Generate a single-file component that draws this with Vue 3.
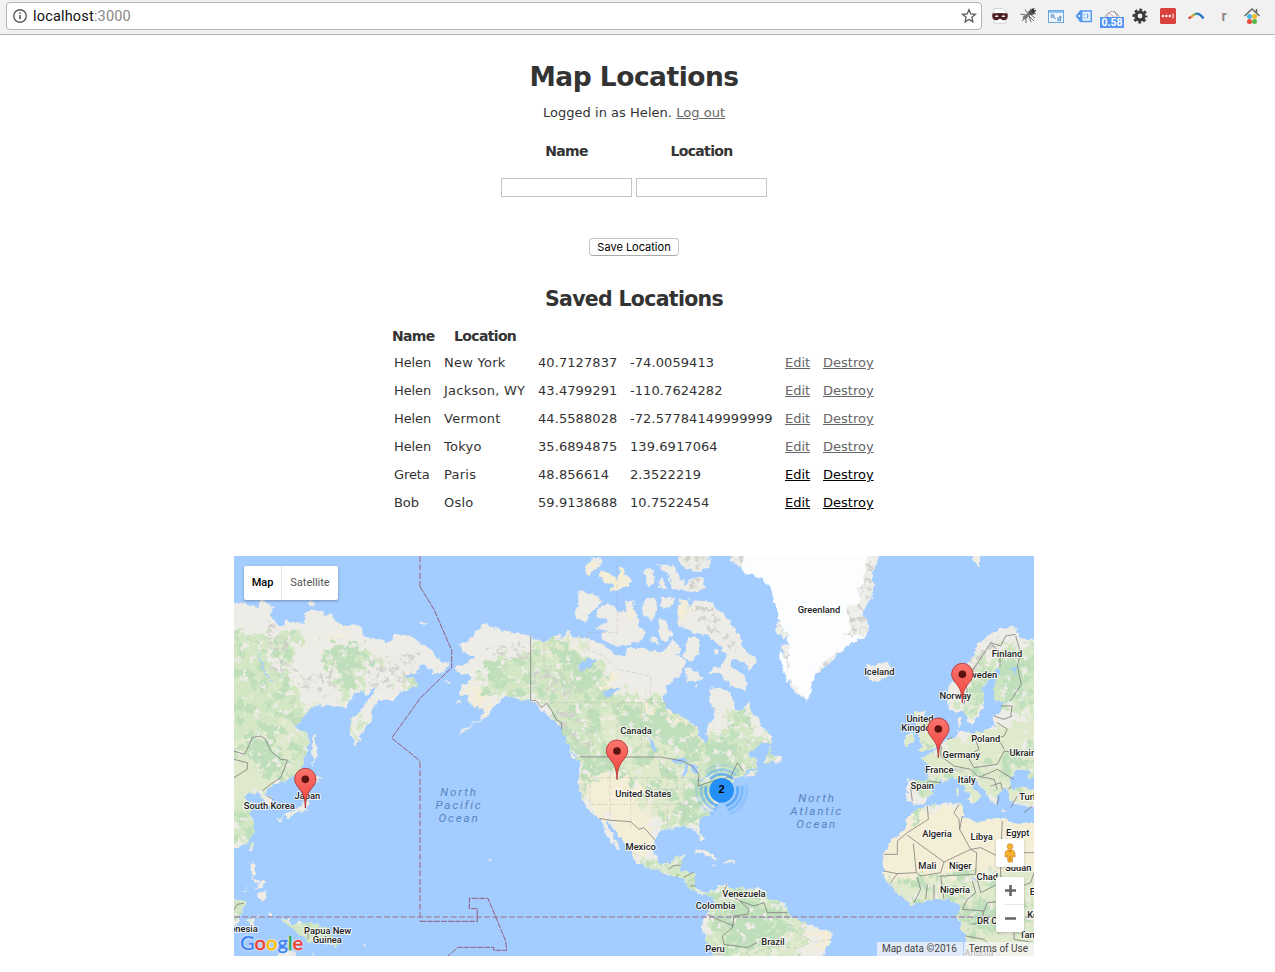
<script setup>
const rows = [
  ['Helen', 'New York', '40.7127837', '-74.0059413'],
  ['Helen', 'Jackson, WY', '43.4799291', '-110.7624282'],
  ['Helen', 'Vermont', '44.5588028', '-72.57784149999999'],
  ['Helen', 'Tokyo', '35.6894875', '139.6917064'],
  ['Greta', 'Paris', '48.856614', '2.3522219'],
  ['Bob', 'Oslo', '59.9138688', '10.7522454'],
]

// Map geometry is kept at three units per CSS pixel.
const land = [
  // Asia
  'M-40 135L30 140 75 155 80 135 100 140 118 155 105 175 135 210 148 213 155 188 165 197 210 200 212 175 232 160 262 168 268 178 298 175 300 190 325 210 375 208 388 222 388 242 415 245 470 262 480 235 520 238 550 252 600 290 605 305 640 318 643 330 620 358 600 350 590 335 560 325 562 340 545 350 510 352 515 362 545 370 551 392 530 395 500 410 480 432 430 432 415 460 412 475 410 495 395 505 390 525 380 540 372 560 360 572 357 550 350 520 352 490 375 470 395 440 410 425 425 397 415 395 400 420 390 415 385 405 360 415 345 435 335 455 300 448 270 450 235 452 215 475 195 500 180 517 215 525 222 540 222 575 215 600 205 632 185 655 150 675 120 685 100 705 95 715 110 725 120 740 118 752 100 755 90 740 85 725 70 705 60 715 40 712 30 725 45 740 62 735 50 755 45 775 60 800 60 825 45 855 25 870 -40 885Z',
  'M220 142L232 134 246 146 226 146ZM550 205L560 196 578 203 572 210ZM627 375L648 378 645 383Z',
  'M235 540L242 536 248 575 252 600 243 602 240 633 234 620Z',
  'M222 668L240 655 262 665 245 678 226 682ZM228 690L220 725 222 750 217 765 190 768 175 777 142 785 155 774 190 760 210 740 215 710ZM132 780L145 785 143 800 135 798ZM155 782L175 775 165 787Z',
  'M50 862L60 865 55 885 48 880ZM50 925L62 922 66 945 58 965 75 980 65 985 50 958ZM76 980L92 976 85 1000 68 995ZM25 1010L45 988 38 1000ZM80 1012L97 1000 100 1028 88 1032 68 1018Z',
  'M-40 1042L20 1028 35 1038 25 1060 15 1085 12 1105 -40 1120ZM40 1090L82 1078 62 1088 55 1100 68 1120 48 1112ZM100 1070L112 1070 112 1085Z',
  'M140 1090L165 1088 175 1105 200 1098 250 1105 280 1120 300 1150 320 1165 300 1170 270 1158 250 1150 225 1160 205 1140 190 1125 160 1110ZM320 1132L355 1122 350 1135ZM385 1155L400 1170 393 1172ZM130 1240L130 1200 142 1186 185 1185 178 1240ZM230 1240L238 1180 246 1240Z',
  // North and Central America
  'M675 265L700 262 710 245 735 215 760 203 775 215 798 222 848 230 888 240 928 262 963 240 983 235 975 252 1003 225 1013 240 1028 250 1035 240 1083 255 1118 270 1133 290 1173 302 1178 280 1198 275 1238 280 1278 290 1298 275 1318 250 1338 280 1328 298 1358 312 1353 330 1333 360 1298 395 1286 430 1298 458 1348 485 1388 512 1393 535 1410 568 1423 545 1418 520 1438 490 1438 460 1426 430 1428 398 1458 395 1493 415 1503 458 1523 468 1541 435 1563 480 1583 512 1615 540 1612 560 1580 562 1555 585 1540 596 1560 606 1573 635 1545 640 1530 664 1510 660 1490 685 1475 715 1460 725 1438 765 1398 790 1393 815 1410 855 1398 855 1383 820 1358 812 1328 812 1298 820 1273 830 1264 855 1260 890 1278 920 1303 925 1318 920 1328 900 1352 895 1343 915 1338 945 1383 950 1383 990 1398 1005 1423 1010 1433 1002 1442 1020 1430 1022 1415 1015 1395 1015 1368 998 1348 968 1313 958 1278 945 1238 932 1198 912 1196 890 1173 860 1148 830 1123 797 1122 812 1160 878 1153 882 1118 838 1098 790 1068 768 1043 730 1033 680 1038 612 1010 585 983 520 948 480 925 465 900 435 858 430 818 420 803 430 780 452 760 482 720 505 690 527 665 540 695 518 740 490 750 470 740 455 715 450 700 420 680 415 685 390 715 370 700 352 670 350 665 332 700 320 720 302 690 290Z',
  'M1592 620L1600 595 1613 568 1608 595 1640 600 1643 620 1618 615 1610 622ZM1532 665L1550 646 1580 638 1565 655ZM660 435L680 432 675 440ZM1000 580L1020 600 1035 612 1015 608Z',
  'M1378 888L1398 880 1430 892 1455 907 1435 908 1410 894ZM1468 922L1480 912 1505 916 1505 924ZM1430 924L1446 925 1440 929ZM1522 923L1532 924ZM763 905L773 912 766 918Z',
  // Arctic islands
  'M1033 108L1068 110 1108 137 1073 165 1053 205 1023 180 1033 150ZM1118 145L1143 150 1148 162 1175 168 1172 140 1198 132 1200 160 1213 200 1233 235 1218 255 1188 265 1148 270 1113 260 1098 235 1125 228 1083 215 1125 195 1083 180 1090 162Z',
  'M1048 45L1078 5 1105 10 1098 30 1063 57ZM1098 40L1128 55 1150 72 1160 30 1170 38 1173 60 1195 65 1188 90 1148 102 1123 108 1138 90 1103 70ZM1223 42L1253 35 1260 80 1243 92 1233 60ZM1278 70L1293 75 1295 100 1273 95ZM1268 25L1318 25 1328 50 1348 75 1360 100 1338 105 1313 100 1305 50ZM1328 15L1358 -30 1423 -30 1428 35 1398 45 1358 40ZM1365 70L1408 65 1416 95 1378 108 1350 105Z',
  'M1238 125L1263 125 1268 165 1253 197 1238 185 1223 160ZM1280 122L1323 125 1313 155 1288 160ZM1278 190L1293 190 1308 220 1318 235 1298 260 1278 250 1273 210ZM1363 240L1398 250 1398 290 1368 320 1348 300 1358 265ZM1358 335L1368 335 1403 365 1393 375 1358 375ZM1250 260L1258 240 1278 265ZM1440 278L1453 280 1450 300 1437 296ZM1378 392L1390 390 1388 400Z',
  'M1338 135L1368 130 1361 165 1373 140 1403 132 1438 140 1458 170 1483 185 1498 215 1518 240 1528 280 1570 310 1548 345 1528 320 1498 310 1488 330 1528 355 1543 380 1533 405 1488 385 1458 355 1428 350 1438 335 1463 335 1478 300 1453 265 1418 235 1378 230 1343 215 1328 195Z',
  // South America
  'M1438 1000L1482 980 1485 995 1590 1000 1600 1025 1650 1040 1665 1080 1740 1110 1795 1130 1797 1150 1775 1175 1755 1240 1440 1240 1435 1180 1410 1140 1403 1110 1420 1070 1442 1045 1432 1010Z',
  // Europe
  'M2440 260L2360 245 2350 220 2330 210 2290 222 2250 245 2220 272 2230 278 2210 310 2180 355 2145 390 2138 415 2145 460 2165 472 2193 455 2200 500 2215 507 2235 475 2250 450 2245 400 2268 370 2290 333 2302 345 2280 380 2280 430 2310 440 2335 434 2300 450 2300 470 2280 480 2280 510 2240 530 2210 532 2178 523 2168 495 2182 485 2177 520 2165 545 2135 550 2120 570 2090 595 2057 608 2085 625 2080 675 2020 670 2017 735 2040 745 2050 748 2070 740 2095 715 2090 700 2120 675 2160 665 2190 690 2215 740 2230 730 2245 720 2215 690 2190 655 2210 665 2250 700 2270 735 2285 747 2290 720 2305 700 2325 700 2325 730 2350 748 2440 752Z',
  'M1890 320L1920 330 1960 318 1980 345 1935 377 1900 365 1915 347ZM2045 465L2070 460 2075 490 2090 520 2112 555 2100 578 2050 588 2065 570 2055 540ZM2015 535L2040 530 2040 560 2010 568ZM2168 695L2175 695 2174 720 2168 718ZM2200 730L2220 728 2217 743ZM2034 402L2037 402 2036 405ZM2214 -30L2240 -30 2238 30 2232 36 2218 15ZM2302 762L2318 763 2305 768Z',
  // Africa
  'M2045 760L2080 750 2120 742 2185 742 2190 770 2180 780 2230 800 2270 790 2310 790 2345 803 2440 800 2440 1240 2210 1240 2195 1150 2170 1080 2180 1050 2145 1030 2110 1030 2030 1047 1990 1010 1965 985 1948 960 1948 900 1975 850 2010 822 2020 790Z',
]

const ice = 'M1490 15L1520 32 1530 50 1590 68 1610 100 1625 150 1635 195 1660 240 1665 330 1650 300 1638 280 1640 320 1670 390 1720 440 1730 400 1745 350 1790 320 1830 275 1895 240 1905 222 1885 170 1918 115 1915 60 1935 0 1935 -40 1510 -40Z'
const iceEdge = 'M1905 -40L1890 70 1870 100 1885 140 1840 150 1850 220 1820 240 1895 240 1907 222 1885 170 1918 115 1915 60 1935 0 1935 -40ZM1635 195L1625 225 1650 250 1660 240ZM1642 262L1665 270 1665 370 1695 405 1720 440 1670 390ZM1745 350L1770 320 1810 285 1830 275 1790 320ZM1500 -40L1530 5 1520 35 1490 15Z'

const green = [
  'M-40 220L90 230 100 330 180 370 200 420 170 500 -40 560Z', 'M270 265L400 260 400 310 370 400 330 440 300 340 280 320Z', 'M120 230L200 220 190 270 160 350 130 330Z',
  'M-40 420L120 400 230 460 220 640 130 690 60 640 -40 600Z', 'M-40 740L70 740 70 860 -40 880Z', 'M-40 1030H40V1110H-40ZM140 1090H320V1170H180Z',
  'M735 360L800 310 900 300 900 250 1000 240 1060 300 1100 330 1180 420 1290 430 1400 530 1610 540 1620 640 1500 660 1400 800 1300 820 1250 740 1100 620 1000 580 930 430 740 420Z',
  'M1040 600L1180 600 1160 660 1070 680 1050 740 1035 700Z', 'M1200 910H1400V1010H1350ZM1420 1010L1500 990 1600 1010 1660 1050 1720 1110 1690 1240 1440 1240 1430 1100Z',
  'M2200 360L2300 260 2440 260 2440 480 2300 460 2150 480 2220 400Z', 'M2020 670L2200 640 2440 520 2440 740 2180 680 2080 740Z', 'M1960 960L2100 960 2260 930 2330 980 2440 1020 2440 1130 2210 1150 2180 1050 2030 1040Z', 'M355 490L375 480 370 560 355 540Z', 'M1470 470L1540 460 1560 520 1490 540Z', 'M500 360H560V400H500ZM400 300H440V330H400Z', 'M2050 470L2090 500 2100 580 2050 580Z', 'M2040 760L2090 750 2060 800 2020 820Z',
]
const lime = ['M1060 480L1300 460 1400 550 1390 680 1330 790 1240 780 1170 640Z', 'M-40 560L190 480 180 660 -40 780Z', 'M1950 940L2440 900 2440 1240H1950Z', 'M2040 600L2440 470V740H2180Z', 'M920 270L1000 240 1080 300 980 340Z', 'M1540 1110L1690 1100 1690 1240 1500 1240Z', 'M2040 450L2130 500 2100 600 2000 580Z']
const sand = ['M1040 660L1120 620 1200 660 1220 750 1260 830 1240 900 1200 900 1100 780 1050 730Z', 'M1940 860L2030 780 2180 740 2440 790V940L2230 960 1940 970Z', 'M700 390L740 390 770 430 750 480 710 430Z', 'M1090 360L1150 370 1120 400ZM1240 440L1390 510 1370 525 1240 470ZM1335 130L1370 130 1355 200 1330 190ZM1040 20L1190 30 1188 110 1100 110Z', 'M1740 1110H1800V1180H1740Z', 'M270 230L310 240 300 255Z', 'M1180 100L1200 200 1170 180Z']
const dark = ['M275 270L385 260 370 330 345 390 300 340Z', 'M125 285L165 285 155 350Z', 'M970 240L1080 320 1090 410 1010 380Z', 'M1160 450L1290 480 1400 560 1360 600 1240 530 1160 500Z', 'M740 350L810 320 790 400Z', 'M1460 1040L1640 1060 1640 1170 1480 1180Z', 'M1380 690L1430 700 1370 800 1310 790Z', 'M1410 560L1520 540 1510 620 1420 640Z', 'M2220 400L2280 330 2260 460ZM2300 300H2370V420H2290Z', 'M2180 1050L2290 1040 2280 1110 2190 1100Z', 'M20 540L120 560 150 660 90 660Z', 'M1050 610L1150 600 1090 660 1050 660Z', 'M990 520L1060 580 1040 610 1000 570Z']
const rocks = ['M100 180L140 230 170 270 130 300 220 360 300 340 310 440 220 400 110 340Z', 'M400 300L560 290 540 370 430 410 390 360Z', 'M760 270L900 250 880 310 760 300Z', 'M890 340L980 340 1040 400 1010 430 900 390Z', 'M940 430L1000 430 1080 560 1050 590 970 500Z', 'M1370 150L1440 150 1470 220 1530 300 1560 320 1500 290 1450 240 1390 200Z', 'M1330 -10H1420V35H1330ZM1360 70H1410V100H1360Z', 'M2150 380L2210 310 2260 250 2340 220 2290 260 2200 380Z', 'M2110 640L2220 635 2190 655Z', 'M1440 1030L1420 1110 1470 1200 1440 1200 1410 1130Z']
const lakes = ['M1030 330L1060 310 1090 307 1080 325 1060 335 1040 345Z', 'M1100 410L1130 400 1155 398 1120 425Z', 'M1238 540L1262 565 1268 595 1255 578Z', 'M1310 610L1350 605 1365 618 1340 620 1325 625ZM1345 660L1352 625 1362 630 1355 670ZM1368 622L1385 630 1392 655 1378 650ZM1378 680L1410 665 1400 678ZM1405 665L1430 658 1425 668Z', 'M2330 700L2328 665 2355 635 2385 650 2380 665 2440 670V705L2370 695Z', 'M2212 960L2226 975 2217 975ZM2345 1075L2360 1080 2350 1098Z', 'M2325 340L2350 335 2345 350Z', 'M75 270L85 330 110 370 128 382 110 374 80 335Z']
const borders = [
  'M0 585L30 595 45 570 55 545 80 540 95 550 110 585 140 610 160 612 150 640 140 665 110 685 85 705M0 665L40 640 40 620 0 610M100 720L118 730M0 1062L10 1045 30 1042',
  'M890 240V433L906 434 922 455 938 442 952 462 968 492 983 500 983 520M1040 603H1280L1345 615 1375 630 1395 655 1392 690 1445 672 1490 663 1510 620 1528 645',
  'M1096 787L1130 793 1190 797 1215 820 1230 815 1264 853M1303 940L1320 928H1340M1335 955L1325 965M1348 965L1380 948M1370 990H1385M1480 985L1470 1005 1518 1035 1545 1060 1540 1075 1500 1080 1495 1115 1465 1140 1470 1165 1540 1175 1570 1160M1420 1075L1450 1090 1500 1110M1518 1035L1560 1050 1590 1040 1600 1070 1660 1070',
  'M2190 445L2200 400 2195 390 2218 340 2238 310 2270 260 2300 270 2315 240 2345 235M2270 262L2298 290 2298 333M2345 240L2360 290 2350 330 2362 385 2330 434M2280 480L2310 490 2335 480M2290 500L2320 520 2310 540 2280 550M2300 450H2335L2330 480M2140 550L2155 545M2122 570L2120 600 2160 630 2210 640 2230 660 2280 670 2290 700M2220 540L2235 580 2200 600 2220 635 2290 625 2310 585 2370 595 2400 590M2295 550L2310 580M2080 675L2120 680M2030 695L2035 735M2325 700L2330 690M2245 660L2290 640 2340 670M2270 690L2300 680 2305 700',
  'M2080 750L2083 790 2020 830 1990 855V895H1950M2020 838L2130 918 2210 880 2177 820 2175 790 2160 770 2175 745M2185 780L2177 820M2210 880L2240 875 2300 905 2305 795M2038 862L2047 950 1990 953 1950 945M2047 950L2060 960 2120 950 2130 918M2210 880L2228 890 2225 955 2120 960 2130 1030M1990 953L1970 980M2050 965L2060 1000 2040 1040M2080 985L2075 1030M2100 985V1030M2215 975L2225 1010 2200 1030 2185 1060 2250 1065 2260 1040 2310 1035M2230 970L2240 1010 2300 980 2300 905M2250 1065L2240 1100 2210 1105M2300 890H2400M2310 1040L2340 1100 2340 1150 2400 1160M2195 1140L2250 1150 2300 1200M2340 1000L2390 980 2400 950',
  'M222 1110V1150M2370 770L2395 750M2290 745L2295 720M2330 755L2350 720',
]
const stateLines = 'M930 240V330H965M1062 250V230H1150V0M1060 255V280L1110 300 1150 340 1250 360V440M890 440H1300M1068 440V500L1080 600M1150 440V560L1170 600M1222 440V600M1287 440L1360 510 1388 512M1540 560L1610 560M1038 665H1400M1068 665V745H1240V665M1128 665V795M1190 665V820M1240 700H1350M1300 620V820M1350 680V810M1240 745H1400M1040 600H1130V665M1700 1110L1690 1130 1740 1160 1790 1150M1560 1190L1630 1170 1700 1180'

const labels = [
  ['Greenland', 1755, 171], ['Iceland', 1936, 356], ['Finland', 2319, 303], ['Sweden', 2240, 366],
  ['Norway', 2164, 430], ['United', 2058, 499], ['Kingdom', 2058, 526], ['Poland', 2255, 558],
  ['Germany', 2182, 605], ['Ukraine', 2374, 601], ['France', 2116, 650], ['Italy', 2198, 681],
  ['Spain', 2065, 699], ['Turkey', 2398, 731], ['Algeria', 2109, 842], ['Libya', 2243, 852],
  ['Egypt', 2351, 840], ['Mali', 2080, 938], ['Niger', 2179, 939], ['Chad', 2260, 972],
  ['Sudan', 2353, 945], ['Nigeria', 2163, 1011], ['DR Congo', 2291, 1105], ['Ethiopia', 2438, 1018], ['Kenya', 2418, 1086],
  ['Tanzania', 2413, 1147], ['Angola', 2235, 1199], ['Canada', 1206, 533], ['United States', 1228, 722],
  ['Mexico', 1220, 882], ['Venezuela', 1530, 1022], ['Colombia', 1445, 1059], ['Peru', 1443, 1187],
  ['Brazil', 1617, 1166], ['Japan', 220, 728], ['South Korea', 106, 760], ['Indonesia', 10, 1127],
  ['Papua New', 281, 1133], ['Guinea', 280, 1160],
]
const oceans = [
  ['North', 675, 720], ['Pacific', 675, 759], ['Ocean', 675, 798],
  ['North', 1749, 738], ['Atlantic', 1748, 777], ['Ocean', 1748, 816],
]
const pins = [[214, 756], [1149, 671], [2185, 441], [2113, 605]]
</script>

<template>
  <div class="window">
    <header class="toolbar">
      <div class="omnibox">
        <svg class="info" width="14" height="14" viewBox="0 0 14 14"><circle cx="7" cy="7" r="6.2" fill="none" stroke="#5a5a5a" stroke-width="1.4" /><path d="M7 6v4.3M7 3.3v1.5" stroke="#5a5a5a" stroke-width="1.6" /></svg>
        <span class="url">localhost<i>:3000</i></span>
        <svg class="star" width="16" height="16" viewBox="0 0 16 16"><path d="M8 1.7l1.8 4.2 4.6.4-3.5 3 1 4.5L8 11.4l-3.9 2.4 1-4.5-3.5-3 4.6-.4z" fill="none" stroke="#5a5a5a" stroke-width="1.3" /></svg>
      </div>
      <div class="extensions">
        <svg viewBox="0 0 28 28"><path d="M8 6.500h8.500l3.500 3.500v11H8z" fill="#fff" stroke="#ccc" stroke-width=".8" /><path d="M6.3 11.500q7.700-1 15.400 0v3.500q-1 4-5.400 3l-2.300-1.500-2.300 1.500q-4.400 1-5.400-3z" fill="#4b1d1c" /><path d="M8.600 14.200q2-1.800 4 0-2 1.800-4 0M15.400 14.200q2-1.800 4 0-2 1.800-4 0" fill="#eee" /></svg>
        <svg viewBox="0 0 28 28"><g fill="none" stroke="#666" stroke-width="1"><path d="M6.500 12l5 1-2 4M8 19l4-4 0 6M11 7.500l3 4M15 14l2 6M16 12l5 4M14 13l6 6" /><path d="M9.500 16.500L15 12" stroke-width="3.500" stroke="#777" /><path d="M17 6.500l-1 3M22 12l-3-1" /></g><ellipse cx="17.300" cy="10.500" rx="3" ry="2.500" fill="#555" /><circle cx="19.500" cy="8.500" r="2.200" fill="#333" /><circle cx="20.500" cy="7.500" r=".7" fill="#fff" /></svg>
        <svg viewBox="0 0 28 28"><rect x="6.500" y="8.500" width="15" height="12" fill="#eef5fd" stroke="#6ba6df" /><path d="M7 10h14" stroke="#8fc1ef" stroke-width="2" /><g fill="none" stroke="#6499cb" stroke-width="1.200"><circle cx="10.500" cy="14" r="1.400" /><rect x="16" y="16" width="2.500" height="2.500" /><path d="M12.500 15.500l1 1.500M17.500 14l2 1.500" /></g></svg>
        <svg viewBox="0 0 28 28"><path d="M6.500 14l4-5H21.300v10.500H10.500z" fill="#e4f0ff" stroke="#5599ec" stroke-width="1.400" /><path d="M6.500 14l4-5h2v10.500h-2z" fill="#5599ec" /><circle cx="9.300" cy="14" r="1" fill="#fff" /><g stroke="#4d94e8" fill="none"><path d="M14.500 12v1.300M14.500 15v1.300M17 11.500q2 2.500 0 5" /></g></svg>
        <span class="gauge"><svg viewBox="0 0 28 28"><path d="M6 18a8 8 0 0 1 16 0" fill="#e4e4e4" stroke="#bbb" /><circle cx="14" cy="14" r="4.500" fill="#f5f5f5" stroke="#aaa" /><path d="M11 11l5 4" stroke="#d99" /><path d="M16 9l5 5" stroke="#999" /></svg><b>0.58</b></span>
        <svg viewBox="0 0 28 28"><circle cx="14" cy="14" r="4" fill="none" stroke="#3b3b3b" stroke-width="3.200" /><circle cx="14" cy="14" r="6.200" fill="none" stroke="#3b3b3b" stroke-width="2.600" stroke-dasharray="2.700 2.170" stroke-dashoffset="1.350" /></svg>
        <svg viewBox="0 0 28 28"><rect x="6" y="6" width="16" height="16" rx="1.500" fill="#d9413d" /><g fill="#fff"><circle cx="9" cy="14" r="1.200" /><circle cx="12.400" cy="14" r="1.200" /><circle cx="15.800" cy="14" r="1.200" /><path d="M18.600 11.500h1v5h-1z" /></g></svg>
        <svg viewBox="0 0 28 28"><g fill="none" stroke-width="2.400"><path d="M6.500 16.500l3-1.800" stroke="#d85448" /><path d="M9.300 15l2.500-2.300" stroke="#f0a331" /><path d="M11.500 13l2.800-1.500" stroke="#64b565" /><path d="M14 11.600q4-.3 7.500 4.900" stroke="#2c72bd" /></g></svg>
        <span class="letter">r</span>
        <svg viewBox="0 0 28 28"><path d="M6.500 14L14 7l7.500 7M18.500 7v4" fill="none" stroke="#666" stroke-width="1.500" /><circle cx="11.500" cy="14.500" r="2.500" fill="#44b6ec" /><circle cx="16.500" cy="14.500" r="2.500" fill="#f2b82d" /><circle cx="11.500" cy="19.500" r="2.500" fill="#ed4939" /><circle cx="16.500" cy="19.500" r="2.500" fill="#55b947" /></svg>
      </div>
    </header>

    <main>
      <h1>Map Locations</h1>
      <p class="session">Logged in as Helen. <a>Log out</a></p>
      <form @submit.prevent>
        <div class="fields">
          <label for="name">Name</label><label for="location">Location</label>
          <input id="name"><input id="location">
        </div>
        <button>Save Location</button>
      </form>
      <h2>Saved Locations</h2>
      <div class="table">
        <div class="row head"><b>Name</b><b>Location</b></div>
        <div v-for="(r, i) in rows" :key="i" class="row">
          <span v-for="c in r" :key="c">{{ c }}</span>
          <a :class="{ fresh: i > 3 }">Edit</a><a :class="{ fresh: i > 3 }">Destroy</a>
        </div>
      </div>

      <section class="map">
        <svg class="world" viewBox="0 0 2400 1200">
          <defs>
            <clipPath id="coast"><path v-for="(d, i) in land" :key="i" :d="d" /></clipPath>
            <filter id="shore" class="tint" x="-40" y="-40" width="2480" height="1280" filterUnits="userSpaceOnUse"><feTurbulence type="fractalNoise" baseFrequency=".055" numOctaves="3" seed="4" /><feDisplacementMap in="SourceGraphic" scale="20" xChannelSelector="R" yChannelSelector="G" /></filter>
            <filter id="patch" class="tint" x="-40" y="-40" width="2480" height="1280" filterUnits="userSpaceOnUse"><feTurbulence type="fractalNoise" baseFrequency=".035" numOctaves="4" seed="9" /><feDisplacementMap in="SourceGraphic" scale="100" xChannelSelector="R" yChannelSelector="G" /></filter>
            <filter id="speck" class="tint" color-interpolation-filters="sRGB" x="-40" y="-40" width="2480" height="1280" filterUnits="userSpaceOnUse"><feTurbulence type="fractalNoise" baseFrequency=".05" numOctaves="3" seed="6" result="n" /><feColorMatrix in="n" values="0 0 0 0 .93  0 0 0 0 .925  0 0 0 0 .9  9 0 0 0 -5.400" result="c" /><feComposite in="c" in2="SourceGraphic" operator="in" /></filter>
            <filter id="wood" class="tint" color-interpolation-filters="sRGB" x="-40" y="-40" width="2480" height="1280" filterUnits="userSpaceOnUse"><feTurbulence type="fractalNoise" baseFrequency=".03" numOctaves="4" seed="21" result="n" /><feColorMatrix in="n" values="0 0 0 0 .75  0 0 0 0 .87  0 0 0 0 .73  0 9 0 0 -4.600" result="c" /><feComposite in="c" in2="SourceGraphic" operator="in" /></filter>
            <filter id="relief" class="tint" color-interpolation-filters="sRGB" x="-40" y="-40" width="2480" height="1280" filterUnits="userSpaceOnUse"><feTurbulence type="fractalNoise" baseFrequency=".06" numOctaves="3" seed="33" result="n" /><feColorMatrix in="n" values="0 0 0 0 .82  0 0 0 0 .815  0 0 0 0 .8  0 0 6 0 -3.100" result="c" /><feComposite in="c" in2="SourceGraphic" operator="in" /></filter>
            <linearGradient id="red" x2="0" y2="1"><stop stop-color="#fb766f" /><stop offset="1" stop-color="#ee3f39" /></linearGradient>
          </defs>
          <rect width="2400" height="1200" fill="#a3ccff" />
          <g filter="url(#shore)">
            <g clip-path="url(#coast)">
              <rect x="-40" y="-40" width="2480" height="1280" fill="#edece6" />
              <g filter="url(#patch)">
                <path v-for="(d, i) in green" :key="i" :d="d" fill="#d3e7c4" />
                <path v-for="(d, i) in lime" :key="i" :d="d" fill="#dfe9cb" />
                <path v-for="(d, i) in sand" :key="i" :d="d" fill="#f5eed7" />
                <path v-for="(d, i) in dark" :key="i" :d="d" fill="#bfdebb" />
              </g>
              <g filter="url(#wood)"><path v-for="(d, i) in green" :key="i" :d="d" /></g>
              <g filter="url(#speck)"><path v-for="(d, i) in green" :key="i" :d="d" /></g>
              <g filter="url(#relief)"><path v-for="(d, i) in rocks" :key="i" :d="d" /></g>
              <path v-for="(d, i) in lakes" :key="i" :d="d" fill="#a3ccff" />
            </g>
            <path :d="ice" fill="#fcfdff" />
            <path :d="iceEdge" fill="#eeeeea" />
            <g filter="url(#relief)"><path :d="iceEdge" /></g>
          </g>
          <path :d="stateLines" fill="none" stroke="#aaa" stroke-opacity=".5" stroke-width="2" stroke-dasharray="14 6" />
          <path v-for="(d, i) in borders" :key="i" :d="d" fill="none" stroke="#777" stroke-opacity=".75" stroke-width="3" stroke-linejoin="round" />
          <path d="M0 1083H2400M558 0V92M558 618V1096" fill="none" stroke="#a38cac" stroke-width="5" stroke-dasharray="18 7" />
          <path d="M558 92L600 160 653 283V335L560 425 473 546 558 615M558 1096H730V1058H706V1027H762L815 1155 818 1183H779V1174H672L642 1200" fill="none" stroke="#925d7c" stroke-width="3" stroke-dasharray="18 3" />
          <text v-for="(l, i) in labels" :key="i" class="place" :x="l[1]" :y="l[2]">{{ l[0] }}</text>
          <text v-for="(l, i) in oceans" :key="i" class="ocean" :x="l[1]" :y="l[2]">{{ l[0] }}</text>
          <g transform="translate(1463 703)" fill="none" stroke="#3a9af8" stroke-width="9">
            <g v-for="a in [0, 120, 240]" :key="a" :transform="`rotate(${a})`">
              <path d="M-34 -34A48 48 0 0 1 34 -34" opacity=".65" /><path d="M-42 -45A62 62 0 0 1 42 -45" opacity=".38" /><path d="M-50 -56A75 75 0 0 1 50 -56" opacity=".16" />
            </g>
            <circle r="37" fill="#2590f8" stroke="none" />
          </g>
          <text class="count" x="1463" y="712">2</text>
          <g v-for="(p, i) in pins" :key="i" :transform="`translate(${p[0]} ${p[1]})`">
            <path d="M0 0C-2 -36-7 -43-19 -59-27 -69-32 -76-32 -87A32 32 0 0 1 32 -87C32 -76 27 -69 19 -59 7 -43 2 -36 0 0Z" fill="url(#red)" stroke="#ae302c" stroke-width="2.500" /><circle cy="-86" r="11.500" fill="#5c1310" />
          </g>
        </svg>
        <div class="types"><b>Map</b><span>Satellite</span></div>
        <div class="google"><i>G</i><i>o</i><i>o</i><i>g</i><i>l</i><i>e</i></div>
        <div class="controls">
          <div class="pegman"><svg width="14" height="20" viewBox="0 0 14 20"><path d="M4.500 7h5l2 1.500.7 5-1.500.5-1-2-.4 7H5l-.6-7-1 2-1.500-.500.600-5z" fill="#f7b52d" stroke="#c88820" stroke-width=".7" /><circle cx="7" cy="3.500" r="2.800" fill="#f7b52d" stroke="#c88820" stroke-width=".7" /><path d="M5.500 7l1.500 2 1.500-2M7 13v5" stroke="#d67b18" fill="none" /></svg></div>
          <div class="zoomer"><svg width="28" height="56" viewBox="0 0 28 56"><path d="M9 13.500h11M14.500 8v11M9 41.500h11" stroke="#666" stroke-width="2.600" /><path d="M9 27.500h19" stroke="#e6e6e6" /></svg></div>
        </div>
        <div class="credits"><span>Map data ©2016</span><span>Terms of Use</span></div>
      </section>
    </main>
  </div>
</template>

<style>
body { background: #fff; }
</style>

<style scoped>
.window { width: 1275px; height: 972px; overflow: hidden; font-family: Verdana, "DejaVu Sans", sans-serif; color: #333; font-size: 13px; }
.toolbar { box-sizing: content-box; height: 32px; background: #f1f1f1; border-bottom: 1px solid #b4b4b4; display: flex; padding: 2px 9px 0 6px; }
.omnibox { box-sizing: border-box; width: 976px; height: 28px; border: 1px solid #b5b5b5; border-radius: 4px; background: #fff; display: flex; align-items: center; padding: 0 4px 0 6px; }
.url { flex: 1; margin-left: 6px; font: 14.500px Roboto, sans-serif; letter-spacing: .18px; color: #111; }
.url i { font-style: normal; color: #888; }
.extensions { display: flex; margin-left: 4px; }
.extensions > * { display: block; width: 28px; height: 28px; flex: none; }
.gauge { position: relative; }
.gauge svg { display: block; width: 28px; height: 28px; }
.gauge b { position: absolute; left: 2px; top: 15px; width: 24px; height: 11px; background: #5595ef; color: #fff; font: bold 10.500px/12px Roboto, sans-serif; text-align: center; }
.letter { font: bold 14px/28px Roboto, sans-serif; color: #888; text-align: center; }
main { width: 1268px; display: flex; flex-direction: column; align-items: center; }
h1 { font-size: 26.500px; letter-spacing: -.5px; line-height: 32px; margin: 26px 0 0; }
.session { margin: 10px 0 0; line-height: 20px; letter-spacing: .03px; }
a { color: #666; text-decoration: underline; }
a.fresh { color: #000; }
form { display: flex; flex-direction: column; align-items: center; margin-top: 18px; }
.fields { display: grid; grid-template-columns: 131px 131px; column-gap: 4px; }
.fields label { font-weight: bold; font-size: 14px; letter-spacing: -.65px; line-height: 20px; text-align: center; }
.fields input { box-sizing: border-box; width: 131px; height: 19px; border: 1px solid #c4c4c4; margin: 17px 0 0; padding: 0; }
button { margin: 41px 0 0; padding: 0; width: 90px; height: 18px; background: #fff; border: 1px solid #c5c5c5; border-bottom-color: #aaa; border-radius: 4px; font: 11px/15px Inter, sans-serif; color: #000; white-space: nowrap; }
h2 { font-size: 20.500px; letter-spacing: -.7px; line-height: 26px; margin: 30px 0 0; }
.table { width: 484px; margin-top: 12px; }
.row { display: grid; grid-template-columns: 50px 94px 92px 155px 38px 53px; padding-left: 2px; height: 28px; line-height: 28px; white-space: nowrap; }
.row span { letter-spacing: .08px; }
.row span:nth-child(1) { letter-spacing: -.1px; }
.row span:nth-child(2) { letter-spacing: .25px; }
.head { height: 25px; line-height: 25px; font-size: 14px; letter-spacing: -.65px; }
.head b:first-child { margin-left: -2px; }
.head b:last-child { margin-left: 10px; }
.map { position: relative; width: 800px; height: 400px; margin-top: 39px; overflow: hidden; font-family: Roboto, sans-serif; }
.world { display: block; width: 800px; height: 400px; }
.place { font: 500 28px Roboto, sans-serif; text-anchor: middle; fill: #222; stroke: #fff; stroke-opacity: .75; stroke-width: 6px; paint-order: stroke; stroke-linejoin: round; }
.ocean { font: italic 34.500px Roboto, sans-serif; letter-spacing: 5.500px; text-anchor: middle; fill: #5784c1; }
.count { font: bold 33px "Liberation Sans", sans-serif; text-anchor: middle; fill: #000; }
.types { position: absolute; left: 10px; top: 10px; display: flex; height: 34px; background: #fff; border-radius: 2px; box-shadow: 0 1px 3px rgba(0, 0, 0, .3); font-size: 11px; line-height: 33px; }
.types b { width: 37px; border-right: 1px solid #e4e4e4; font-weight: 500; color: #000; text-align: center; }
.types span { width: 56px; text-align: center; color: #555; }
.google { position: absolute; left: 6px; bottom: 1px; font: 500 20px/26px Lato, sans-serif; display: flex; text-shadow: 0 0 2px #fff, 0 0 2px #fff, 0 0 1px #fff; }
.google i { font-style: normal; color: #4285f4; -webkit-text-stroke: .5px currentColor; }
.google i:nth-child(2), .google i:nth-child(6) { color: #ea4335; }
.google i:nth-child(3) { color: #fbbc05; }
.google i:nth-child(5) { color: #34a853; }
.controls { position: absolute; right: 10px; top: 283px; display: flex; flex-direction: column; gap: 10px; }
.controls > div { background: #fff; border-radius: 2px; box-shadow: 0 1px 3px rgba(0, 0, 0, .2); width: 28px; }
.pegman { height: 28px; display: flex; justify-content: center; align-items: center; }
.zoomer { height: 55px; overflow: hidden; }
.credits { position: absolute; right: 0; bottom: 0; display: flex; height: 14px; font-size: 10px; line-height: 14px; color: #444; }
.credits span { background: rgba(245, 245, 245, .75); padding: 0 6px 0 5px; white-space: nowrap; margin-left: 1px; }
</style>
